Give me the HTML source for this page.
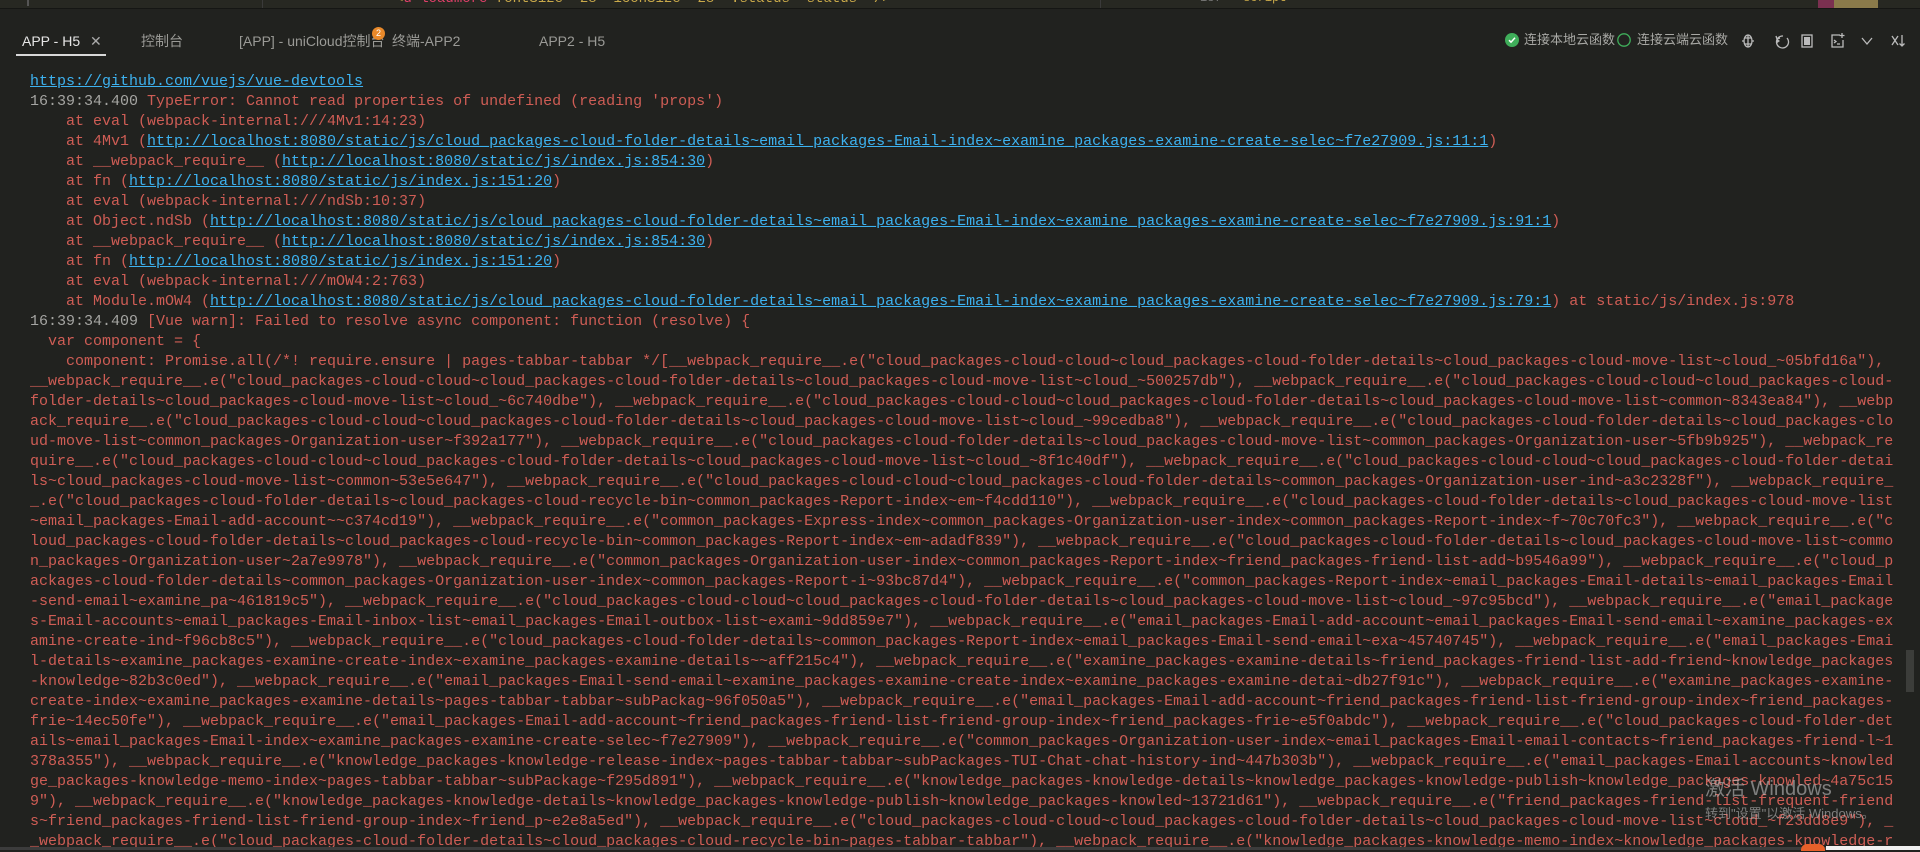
<!DOCTYPE html>
<html><head><meta charset="utf-8">
<style>
html,body{margin:0;padding:0;}
body{width:1920px;height:850px;overflow:hidden;background:#21221f;position:relative;font-family:"Liberation Sans","Noto Sans CJK SC",sans-serif;}
.top{position:absolute;left:0;top:0;width:1920px;height:8px;background:#272822;border-bottom:1px solid #151614;overflow:hidden;}
.tab{position:absolute;top:31px;font-size:14px;color:#9a9a96;white-space:nowrap;line-height:20px;}
.con{position:absolute;left:30px;top:72px;font-family:"Liberation Mono",monospace;font-size:15px;line-height:20px;color:#cf5d55;}
.con div{height:20px;overflow:hidden;width:1880px;white-space:pre;}
.t{color:#a5a5a2;}
.l{color:#3db2f0;text-decoration:underline;}
.rt{position:absolute;top:32px;font-size:13px;color:#a8a8a4;white-space:nowrap;line-height:16px;}
</style></head><body>
<div class="top">
 <div style="position:absolute;left:27px;top:-6px;width:2px;height:12px;background:#555;"></div>
 <div style="position:absolute;left:262px;top:-4px;width:1px;height:12px;background:#3a3a3a"></div>
 <div style="position:absolute;left:286px;top:-7px;font:10px 'Liberation Mono',monospace;color:#777">18</div>
 <div style="position:absolute;left:395px;top:-9px;font:14px 'Liberation Mono',monospace;color:#c9a94a;white-space:pre">&lt;<span style="color:#e0406a">u-loadmore</span> fontSize="28" iconSize="28" :status="status" /&gt;</div>
 <div style="position:absolute;left:1100px;top:0;width:1px;height:8px;background:#3a3a3a"></div>
 <div style="position:absolute;left:1200px;top:-9px;font:12px 'Liberation Mono',monospace;color:#777;white-space:pre">187  <span style="color:#c9a94a">&lt;script&gt;</span></div>
 <div style="position:absolute;left:1818px;top:0;width:60px;height:8px;background:#8a7a4a"></div>
 <div style="position:absolute;left:1818px;top:0;width:16px;height:8px;background:#7a3050"></div>
</div>

<div class="tab" style="left:22px;color:#e6e6e6">APP - H5 <span style="color:#aaa;margin-left:6px">✕</span></div>
<div style="position:absolute;left:16px;top:54px;width:90px;height:2px;background:#d8d8d8"></div>
<div class="tab" style="left:141px">控制台</div>
<div class="tab" style="left:239px">[APP] - uniCloud控制台</div>
<div style="position:absolute;left:372px;top:27px;width:13px;height:13px;border-radius:50%;background:#e8892a;color:#fff;font-size:9px;line-height:13px;text-align:center">2</div>
<div class="tab" style="left:392px">终端-APP2</div>
<div class="tab" style="left:539px">APP2 - H5</div>

<svg style="position:absolute;left:1505px;top:33px" width="14" height="14"><circle cx="7" cy="7" r="7" fill="#3fae5a"/><path d="M4 7.2l2 2 4-4.4" stroke="#fff" stroke-width="1.5" fill="none"/></svg>
<div class="rt" style="left:1524px">连接本地云函数</div>
<svg style="position:absolute;left:1617px;top:33px" width="14" height="14"><circle cx="7" cy="7" r="6.2" fill="none" stroke="#3fae5a" stroke-width="1.3"/></svg>
<div class="rt" style="left:1637px">连接云端云函数</div>
<svg style="position:absolute;left:1741px;top:32px" width="180" height="18" fill="none" stroke="#bbb" stroke-width="1.3">
 <ellipse cx="7" cy="9" rx="4" ry="6"/><path d="M3 6h8M3 12h8M7 3v12M1 9h2M11 9h2"/>
 <path d="M42 4a6 6 0 1 0 4 2"/><path d="M35 4l1 3 3-1"/><path d="M35.5 6.5l3.5 2.5-3.5 2.5z" fill="#bbb" stroke="none"/>
 <rect x="61" y="3" width="10" height="12"/><rect x="63" y="5" width="6" height="8" fill="#bbb" stroke="none"/>
 <path d="M99 3h-8v12h11v-7"/><path d="M93 8l2 1.5-2 1.5M96 12h3M101 1v5M98.5 3.5h5"/>
 <path d="M121 6l5 6 5-6"/>
 <path d="M151 4l6 9M157 4l-6 9M161 3v11M158.5 11.5l2.5 2.5 2.5-2.5"/>
</svg>

<div class="con"><div><span class="l">https://github.com/vuejs/vue-devtools</span></div><div><span class="t">16:39:34.400</span> TypeError: Cannot read properties of undefined (reading 'props')</div><div>    at eval (webpack-internal:///4Mv1:14:23)</div><div>    at 4Mv1 (<span class="l">http://localhost:8080/static/js/cloud_packages-cloud-folder-details~email_packages-Email-index~examine_packages-examine-create-selec~f7e27909.js:11:1</span>)</div><div>    at __webpack_require__ (<span class="l">http://localhost:8080/static/js/index.js:854:30</span>)</div><div>    at fn (<span class="l">http://localhost:8080/static/js/index.js:151:20</span>)</div><div>    at eval (webpack-internal:///ndSb:10:37)</div><div>    at Object.ndSb (<span class="l">http://localhost:8080/static/js/cloud_packages-cloud-folder-details~email_packages-Email-index~examine_packages-examine-create-selec~f7e27909.js:91:1</span>)</div><div>    at __webpack_require__ (<span class="l">http://localhost:8080/static/js/index.js:854:30</span>)</div><div>    at fn (<span class="l">http://localhost:8080/static/js/index.js:151:20</span>)</div><div>    at eval (webpack-internal:///mOW4:2:763)</div><div>    at Module.mOW4 (<span class="l">http://localhost:8080/static/js/cloud_packages-cloud-folder-details~email_packages-Email-index~examine_packages-examine-create-selec~f7e27909.js:79:1</span>) at static/js/index.js:978</div><div><span class="t">16:39:34.409</span> [Vue warn]: Failed to resolve async component: function (resolve) {</div><div>  var component = {</div><div>    component: Promise.all(/*! require.ensure | pages-tabbar-tabbar */[__webpack_require__.e("cloud_packages-cloud-cloud~cloud_packages-cloud-folder-details~cloud_packages-cloud-move-list~cloud_~05bfd16a"),</div><div>__webpack_require__.e("cloud_packages-cloud-cloud~cloud_packages-cloud-folder-details~cloud_packages-cloud-move-list~cloud_~500257db"), __webpack_require__.e("cloud_packages-cloud-cloud~cloud_packages-cloud-</div><div>folder-details~cloud_packages-cloud-move-list~cloud_~6c740dbe"), __webpack_require__.e("cloud_packages-cloud-cloud~cloud_packages-cloud-folder-details~cloud_packages-cloud-move-list~common~8343ea84"), __webp</div><div>ack_require__.e("cloud_packages-cloud-cloud~cloud_packages-cloud-folder-details~cloud_packages-cloud-move-list~cloud_~99cedba8"), __webpack_require__.e("cloud_packages-cloud-folder-details~cloud_packages-clo</div><div>ud-move-list~common_packages-Organization-user~f392a177"), __webpack_require__.e("cloud_packages-cloud-folder-details~cloud_packages-cloud-move-list~common_packages-Organization-user~5fb9b925"), __webpack_re</div><div>quire__.e("cloud_packages-cloud-cloud~cloud_packages-cloud-folder-details~cloud_packages-cloud-move-list~cloud_~8f1c40df"), __webpack_require__.e("cloud_packages-cloud-cloud~cloud_packages-cloud-folder-detai</div><div>ls~cloud_packages-cloud-move-list~common~53e5e647"), __webpack_require__.e("cloud_packages-cloud-cloud~cloud_packages-cloud-folder-details~common_packages-Organization-user-ind~a3c2328f"), __webpack_require_</div><div>_.e("cloud_packages-cloud-folder-details~cloud_packages-cloud-recycle-bin~common_packages-Report-index~em~f4cdd110"), __webpack_require__.e("cloud_packages-cloud-folder-details~cloud_packages-cloud-move-list</div><div>~email_packages-Email-add-account~~c374cd19"), __webpack_require__.e("common_packages-Express-index~common_packages-Organization-user-index~common_packages-Report-index~f~70c70fc3"), __webpack_require__.e("c</div><div>loud_packages-cloud-folder-details~cloud_packages-cloud-recycle-bin~common_packages-Report-index~em~adadf839"), __webpack_require__.e("cloud_packages-cloud-folder-details~cloud_packages-cloud-move-list~commo</div><div>n_packages-Organization-user~2a7e9978"), __webpack_require__.e("common_packages-Organization-user-index~common_packages-Report-index~friend_packages-friend-list-add~b9546a99"), __webpack_require__.e("cloud_p</div><div>ackages-cloud-folder-details~common_packages-Organization-user-index~common_packages-Report-i~93bc87d4"), __webpack_require__.e("common_packages-Report-index~email_packages-Email-details~email_packages-Email</div><div>-send-email~examine_pa~461819c5"), __webpack_require__.e("cloud_packages-cloud-cloud~cloud_packages-cloud-folder-details~cloud_packages-cloud-move-list~cloud_~97c95bcd"), __webpack_require__.e("email_package</div><div>s-Email-accounts~email_packages-Email-inbox-list~email_packages-Email-outbox-list~exami~9dd859e7"), __webpack_require__.e("email_packages-Email-add-account~email_packages-Email-send-email~examine_packages-ex</div><div>amine-create-ind~f96cb8c5"), __webpack_require__.e("cloud_packages-cloud-folder-details~common_packages-Report-index~email_packages-Email-send-email~exa~45740745"), __webpack_require__.e("email_packages-Emai</div><div>l-details~examine_packages-examine-create-index~examine_packages-examine-details~~aff215c4"), __webpack_require__.e("examine_packages-examine-details~friend_packages-friend-list-add-friend~knowledge_packages</div><div>-knowledge~82b3c0ed"), __webpack_require__.e("email_packages-Email-send-email~examine_packages-examine-create-index~examine_packages-examine-detai~db27f91c"), __webpack_require__.e("examine_packages-examine-</div><div>create-index~examine_packages-examine-details~pages-tabbar-tabbar~subPackag~96f050a5"), __webpack_require__.e("email_packages-Email-add-account~friend_packages-friend-list-friend-group-index~friend_packages-</div><div>frie~14ec50fe"), __webpack_require__.e("email_packages-Email-add-account~friend_packages-friend-list-friend-group-index~friend_packages-frie~e5f0abdc"), __webpack_require__.e("cloud_packages-cloud-folder-det</div><div>ails~email_packages-Email-index~examine_packages-examine-create-selec~f7e27909"), __webpack_require__.e("common_packages-Organization-user-index~email_packages-Email-email-contacts~friend_packages-friend-l~1</div><div>378a355"), __webpack_require__.e("knowledge_packages-knowledge-release-index~pages-tabbar-tabbar~subPackages-TUI-Chat-chat-history-ind~447b303b"), __webpack_require__.e("email_packages-Email-accounts~knowled</div><div>ge_packages-knowledge-memo-index~pages-tabbar-tabbar~subPackage~f295d891"), __webpack_require__.e("knowledge_packages-knowledge-details~knowledge_packages-knowledge-publish~knowledge_packages-knowled~4a75c15</div><div>9"), __webpack_require__.e("knowledge_packages-knowledge-details~knowledge_packages-knowledge-publish~knowledge_packages-knowled~13721d61"), __webpack_require__.e("friend_packages-friend-list-frequent-friend</div><div>s~friend_packages-friend-list-friend-group-index~friend_p~e2e8a5ed"), __webpack_require__.e("cloud_packages-cloud-cloud~cloud_packages-cloud-folder-details~cloud_packages-cloud-move-list~cloud_~f23dd8e9"), _</div><div>_webpack_require__.e("cloud_packages-cloud-folder-details~cloud_packages-cloud-recycle-bin~pages-tabbar-tabbar"), __webpack_require__.e("knowledge_packages-knowledge-memo-index~knowledge_packages-knowledge-r</div></div>

<div style="position:absolute;left:1906px;top:650px;width:8px;height:42px;background:#3c3d3a"></div>
<div style="position:absolute;left:1705px;top:772px;font-size:20px;color:rgba(190,190,190,0.6);white-space:nowrap">激活 Windows</div>
<div style="position:absolute;left:1705px;top:803px;font-size:13px;color:rgba(190,190,190,0.6);white-space:nowrap">转到"设置"以激活 Windows。</div>
<div style="position:absolute;left:0;top:847px;width:1920px;height:3px;background:#3c3c3c"></div>
<div style="position:absolute;left:1801px;top:844px;width:24px;height:7px;border-radius:6px 6px 0 0;background:#e8602a"></div>
<div style="position:absolute;left:1826px;top:846px;width:94px;height:4px;background:#f0f0f0"></div>
</body></html>
